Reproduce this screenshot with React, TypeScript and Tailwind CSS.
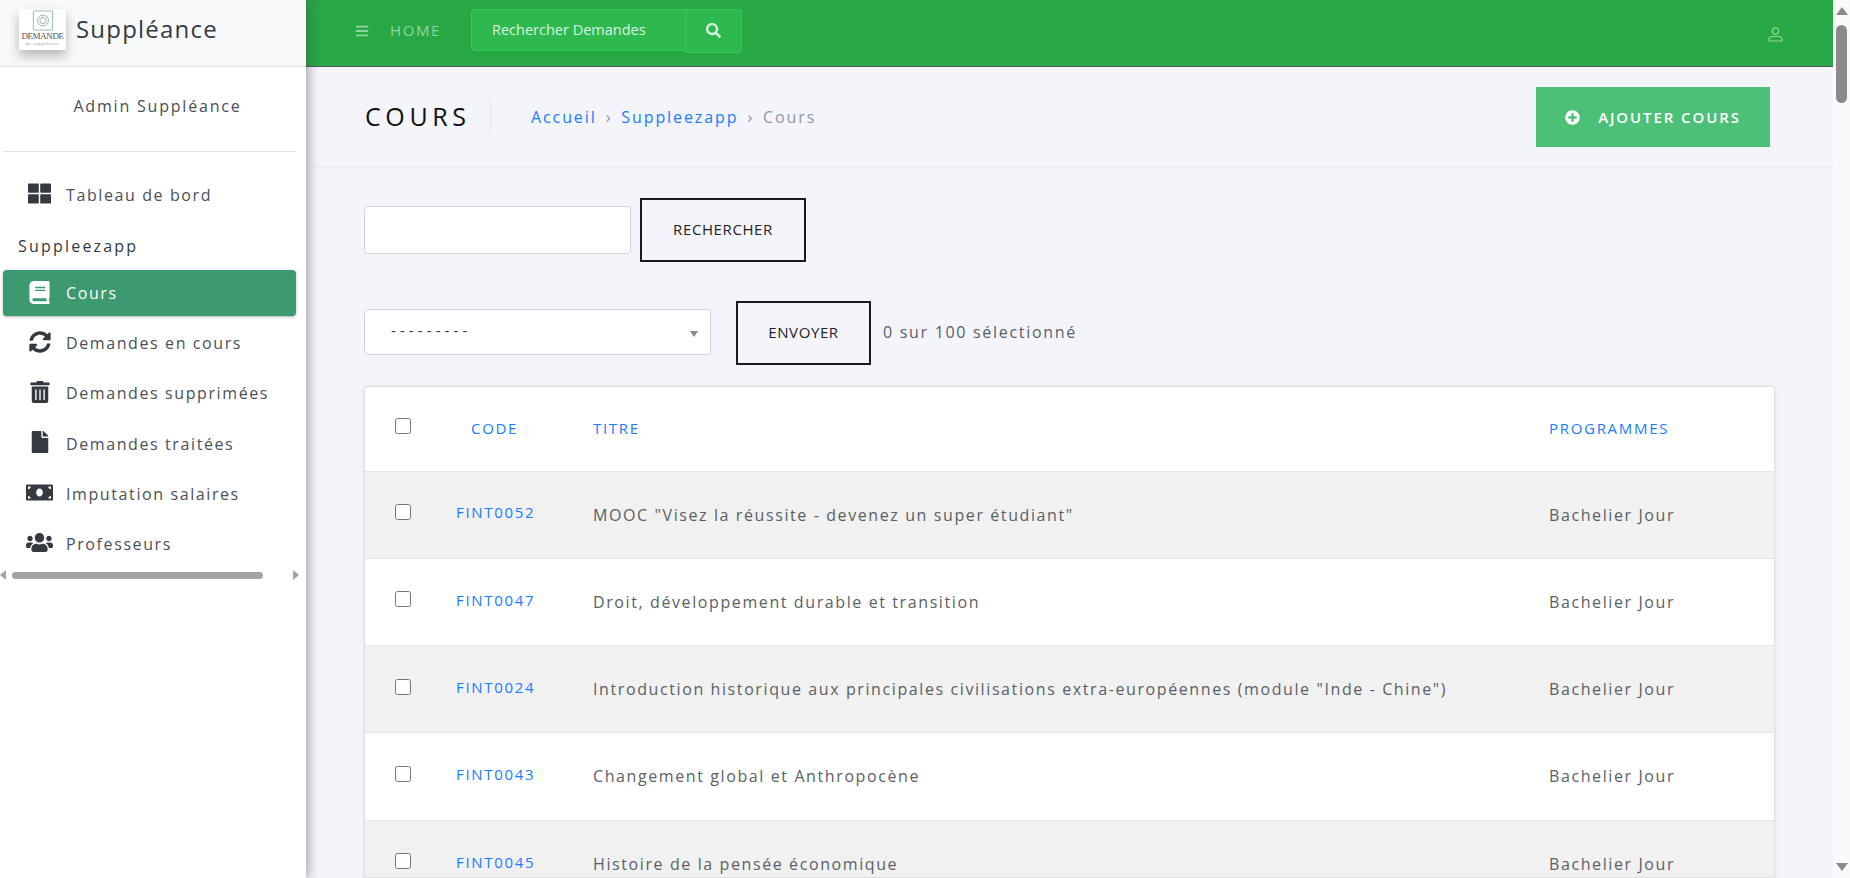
import React from 'react';
import { FaBars, FaBook, FaFile, FaMoneyBill, FaPlusCircle, FaSearch, FaSyncAlt, FaThLarge, FaTrashAlt, FaUsers } from 'react-icons/fa';

const navItems = [
  { label: 'Demandes en cours', icon: FaSyncAlt, size: 22 },
  { label: 'Demandes supprimées', icon: FaTrashAlt, size: 22 },
  { label: 'Demandes traitées', icon: FaFile, size: 22 },
  { label: 'Imputation salaires', icon: FaMoneyBill, size: 27 },
  { label: 'Professeurs', icon: FaUsers, size: 27 },
];

const rows = [
  { code: 'FINT0052', title: 'MOOC "Visez la réussite - devenez un super étudiant"' },
  { code: 'FINT0047', title: 'Droit, développement durable et transition' },
  { code: 'FINT0024', title: 'Introduction historique aux principales civilisations extra-européennes (module "Inde - Chine")' },
  { code: 'FINT0043', title: 'Changement global et Anthropocène' },
  { code: 'FINT0045', title: 'Histoire de la pensée économique' },
];

const Logo = () => (
  <div className="flex h-[41px] w-[47px] flex-col items-center bg-white pt-[1px] shadow-[0_6px_10px_rgba(60,60,60,0.35)]">
    <svg width="22" height="21" viewBox="0 0 24 23" fill="none" stroke="#8fb3a6" strokeWidth="1">
      <rect x="1.5" y="1" width="21" height="21" rx="1" />
      <circle cx="12" cy="11.5" r="6" />
      <circle cx="12" cy="11.5" r="3.5" />
    </svg>
    <span className="font-['Liberation_Serif',serif] text-[9px] leading-[10px] tracking-[-0.4px] text-[#555]">DEMANDE</span>
    <span className="text-[4px] leading-[5px] tracking-[0.5px] text-[#888]">de suppléance</span>
  </div>
);

const Sidebar = () => (
  <aside className="z-20 flex h-full w-[306px] shrink-0 flex-col bg-white shadow-[3px_0_10px_rgba(60,60,70,0.4)]">
    <div className="flex h-[67px] shrink-0 items-center border-b border-[#dee2e6] bg-[#f8f9fa] pb-[8px] pl-[19px]">
      <Logo />
      <span className="ml-[10px] text-[24px] tracking-[1.2px] text-[#343a40]">Suppléance</span>
    </div>
    <div className="ml-[3px] mr-[10px] flex h-[85px] shrink-0 items-center justify-center border-b border-[#dee2e6] pb-[7px] pl-[16px] text-[16px] tracking-[1.8px] text-[#4a4f55]">
      Admin Suppléance
    </div>
    <div className="mt-[18px] flex h-[50px] shrink-0 items-center pl-[28px] text-[#495057]">
      <FaThLarge size={23} className="mb-[4px] text-[#343a40]" />
      <span className="ml-[15px] text-[16px] tracking-[1.6px]">Tableau de bord</span>
    </div>
    <div className="flex h-[50px] shrink-0 items-center pl-[18px] pt-[2px] text-[16px] tracking-[2.2px] text-[#343a40]">Suppleezapp</div>
    <div className="ml-[3px] mr-[10px] flex h-[46px] shrink-0 items-center rounded-[4px] bg-[#3d9970] pl-[25px] text-white shadow-[0_1px_3px_rgba(0,0,0,0.3)]">
      <FaBook size={23} className="mb-[2px]" />
      <span className="ml-[15px] text-[16px] tracking-[1.6px]">Cours</span>
    </div>
    <nav className="mt-[2px] flex flex-col">
      {navItems.map((item) => (
        <div key={item.label} className="flex h-[50.25px] items-center text-[#495057]">
          <span className="mb-[3px] flex w-[66px] justify-center pl-[13px] text-[#343a40]">
            <item.icon size={item.size} />
          </span>
          <span className="text-[16px] tracking-[1.6px]">{item.label}</span>
        </div>
      ))}
    </nav>
    <div className="flex h-[12px] items-center">
      <span className="h-0 w-0 border-y-[5px] border-r-[6px] border-y-transparent border-r-[#a3a3a3]" />
      <span className="ml-[6px] h-[7px] w-[251px] rounded-full bg-[#a3a3a3]" />
      <span className="ml-[30px] h-0 w-0 border-y-[5px] border-l-[6px] border-y-transparent border-l-[#a3a3a3]" />
    </div>
  </aside>
);

const Topbar = () => (
  <header className="flex h-[67px] shrink-0 items-center border-b border-[#4f5560] bg-[#28a745] pb-[5px] pl-[49px] pr-[50px]">
    <FaBars size={14} className="text-[#93d3a2]" />
    <span className="ml-[21px] text-[15px] tracking-[1.6px] text-[#93d3a2]">HOME</span>
    <div className="ml-[30px] flex items-center">
      <input
        readOnly
        placeholder="Rechercher Demandes"
        className="mb-[2px] h-[42px] w-[215px] rounded-l-[4px] border border-[#34c759] bg-[#2eb94f] pl-[20px] text-[14.5px] text-white outline-none placeholder:text-[#d8f3de]"
      />
      <button className="flex h-[44px] w-[56px] items-center justify-center rounded-r-[4px] border border-l-0 border-[#34c759] bg-[#2eb94f] text-[#d8f3de]">
        <FaSearch size={15} />
      </button>
    </div>
    <svg className="ml-auto mt-[7px]" width="15" height="15" viewBox="0 0 15 15" fill="none" stroke="#93d3a2" strokeWidth="1.2">
      <circle cx="7.5" cy="4" r="3.2" />
      <path d="M1 14v-1.5a3 3 0 0 1 3-3h7a3 3 0 0 1 3 3V14z" />
    </svg>
  </header>
);

const TitleBar = () => (
  <div className="flex h-[101px] shrink-0 items-center border-b border-[#ebedf0] pl-[59px] pr-[63px]">
    <h1 className="mb-[2px] w-[126px] border-r border-[#e3e5e8] py-[2px] text-[25px] leading-[26px] tracking-[4.6px] text-[#111]">COURS</h1>
    <div className="ml-[40px] flex items-center text-[16px] tracking-[1.9px]">
      <a className="text-[#1a7cff]">Accueil</a>
      <span className="mx-[9px] text-[#8a9099]">›</span>
      <a className="text-[#1a7cff]">Suppleezapp</a>
      <span className="mx-[9px] text-[#8a9099]">›</span>
      <span className="text-[#8f96a0]">Cours</span>
    </div>
    <button className="ml-auto flex h-[60px] w-[234px] items-center justify-center bg-[#4dc077] text-[15px] font-semibold tracking-[1.9px] text-white">
      <FaPlusCircle size={15} className="mr-[18px]" />
      AJOUTER COURS
    </button>
  </div>
);

const CoursTable = () => (
  <div className="ml-[58px] mr-[58px] mt-[21px] overflow-hidden rounded-t-[4px] border border-[#dcdfe4] bg-white shadow-[0_0_3px_rgba(0,0,0,0.1)]">
    <table className="w-full table-fixed border-collapse">
      <colgroup>
        <col className="w-[70px]" />
        <col className="w-[158px]" />
        <col />
        <col className="w-[225px]" />
      </colgroup>
      <thead>
        <tr className="h-[84px] text-left text-[15px] tracking-[1.7px] text-[#1a7cff]">
          <th className="pb-[6px] pl-[30px] font-normal">
            <input type="checkbox" readOnly className="block h-4 w-4" />
          </th>
          <th className="pb-[2px] pl-[36px] font-medium">CODE</th>
          <th className="pb-[2px] font-medium">TITRE</th>
          <th className="pb-[2px] font-medium">PROGRAMMES</th>
        </tr>
      </thead>
      <tbody>
        {rows.map((row, i) => (
          <tr key={row.code} className={`h-[87.25px] border-t border-[#e6e6e6] ${i % 2 === 0 ? 'bg-[#f1f1f1]' : 'bg-white'}`}>
            <td className="pb-[5px] pl-[30px]">
              <input type="checkbox" readOnly className="block h-4 w-4" />
            </td>
            <td className="pb-[4px] pl-[21px] text-[15px] font-medium tracking-[1.7px] text-[#1a7cff]">{row.code}</td>
            <td className="text-[16px] tracking-[1.6px] text-[#5a5f66]">{row.title}</td>
            <td className="text-[16px] tracking-[1.6px] text-[#5a5f66]">Bachelier Jour</td>
          </tr>
        ))}
      </tbody>
    </table>
  </div>
);

export default function App() {
  return (
    <div className="flex h-screen overflow-hidden font-['Open_Sans',sans-serif]">
      <Sidebar />
      <main className="flex h-full min-w-0 flex-1 flex-col overflow-hidden bg-[#f4f5fa]">
        <Topbar />
        <TitleBar />
        <div className="ml-[58px] mt-[30px] flex items-center">
          <input readOnly className="h-[48px] w-[267px] rounded-[4px] border border-[#d0d5dc] bg-white" />
          <button className="ml-[9px] h-[64px] w-[166px] border-2 border-[#1a1a1a] pb-[2px] text-[15px] tracking-[0.6px] text-[#222]">RECHERCHER</button>
        </div>
        <div className="ml-[58px] mt-[39px] flex items-center">
          <div className="relative mb-[2px] flex h-[46px] w-[347px] items-center rounded-[4px] border border-[#d0d5dc] bg-white pb-[3px] pl-[26px] text-[15px] tracking-[4.1px] text-[#333]">
            ---------
            <span className="absolute right-[12px] top-[21px] h-0 w-0 border-x-[4px] border-t-[6px] border-x-transparent border-t-[#888]" />
          </div>
          <button className="ml-[25px] h-[64px] w-[135px] border-2 border-[#1a1a1a] pb-[2px] text-[15px] tracking-[0.6px] text-[#222]">ENVOYER</button>
          <span className="mb-[2px] ml-[12px] text-[16px] tracking-[1.7px] text-[#5a5f66]">0 sur 100 sélectionné</span>
        </div>
        <CoursTable />
      </main>
      <div className="relative h-full w-[17px] shrink-0 bg-[#fafafa]">
        <span className="absolute left-[3px] top-[7px] h-0 w-0 border-x-[6px] border-b-[8px] border-x-transparent border-b-[#8a8a8a]" />
        <span className="absolute left-[3px] top-[25px] h-[78px] w-[11px] rounded-full bg-[#8a8a8a]" />
        <span className="absolute bottom-[7px] left-[3px] h-0 w-0 border-x-[6px] border-t-[8px] border-x-transparent border-t-[#8a8a8a]" />
      </div>
    </div>
  );
}
